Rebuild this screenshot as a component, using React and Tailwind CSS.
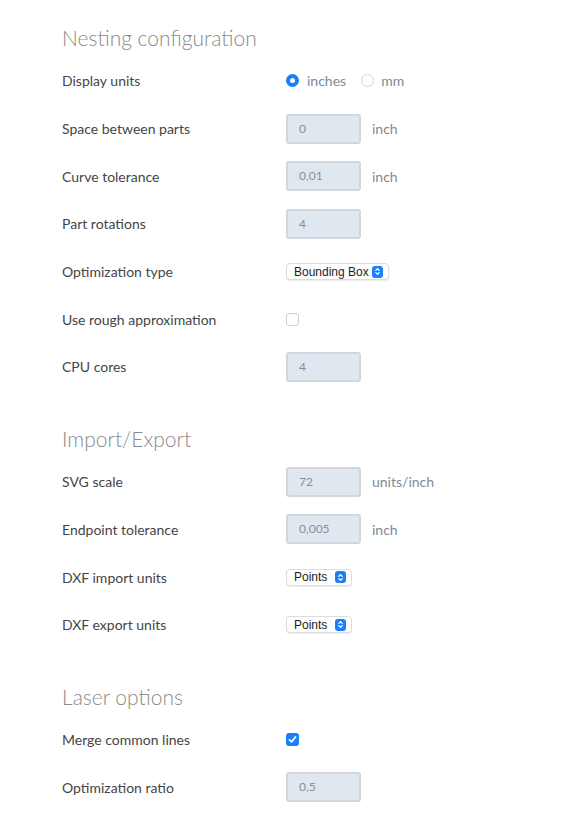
const font = { fontFamily: "Lato, 'Open Sans', sans-serif" };

const Stepper = () => (
  <span className="ml-auto flex h-[12px] w-[11px] items-center justify-center rounded-[3px] bg-[#1a7ff8]">
    <svg width="7" height="9" viewBox="0 0 7 9" fill="none">
      <path d="M1.8 3.4 L3.5 1.7 L5.2 3.4" stroke="white" strokeWidth="1.3" strokeLinecap="round" strokeLinejoin="round" />
      <path d="M1.8 5.6 L3.5 7.3 L5.2 5.6" stroke="white" strokeWidth="1.3" strokeLinecap="round" strokeLinejoin="round" />
    </svg>
  </span>
);

const Select = ({ value, width }) => (
  <div
    className={`flex h-[17px] items-center rounded-[4px] border border-[#dcdcdc] bg-white pl-[7px] pr-[5px] text-[12px] text-[#1c1c1c] shadow-[0_1px_1px_rgba(0,0,0,0.08)] ${width}`}
    style={{ fontFamily: "'Liberation Sans', Arial, sans-serif" }}
  >
    <span>{value}</span>
    <Stepper />
  </div>
);

const Field = ({ value, unit }) => (
  <div className="flex items-center">
    <div className="flex h-[30px] w-[75px] items-center rounded-[3px] border-2 border-[#cfd7e1] bg-[#e1e7ee] pl-[11px] text-[12px] text-[#8190a3]">
      {value}
    </div>
    {unit && <span className="ml-[11px] text-[14px] text-[#7d8a9a]">{unit}</span>}
  </div>
);

const Checkbox = ({ checked }) =>
  checked ? (
    <span className="flex h-[13px] w-[13px] items-center justify-center rounded-[3px] bg-[#1a7ff8]">
      <svg width="9" height="9" viewBox="0 0 9 9" fill="none">
        <path d="M1.5 4.8 L3.6 6.9 L7.5 2" stroke="white" strokeWidth="1.7" strokeLinecap="round" strokeLinejoin="round" />
      </svg>
    </span>
  ) : (
    <span className="block h-[13px] w-[13px] rounded-[3px] border border-[#cfcfcf] bg-white" />
  );

const Radio = () => (
  <div className="flex items-center text-[14px] text-[#7d8a9a]">
    <span className="block h-[13px] w-[13px] rounded-full border-[4px] border-[#1a7ff8] bg-white" />
    <span className="ml-[8px]">inches</span>
    <span className="ml-[15px] block h-[13px] w-[13px] rounded-full border border-[#d6d6d6] bg-white" />
    <span className="ml-[7px]">mm</span>
  </div>
);

const Row = ({ label, children }) => (
  <div className="flex h-[47.7px] items-center">
    <div className="w-[224px] text-[14px] text-[#454545]">{label}</div>
    <div className="flex-1">{children}</div>
  </div>
);

const Section = ({ title, className, children }) => (
  <section className={className}>
    <h2 className="flex h-[38px] items-center text-[21px] font-light text-[#8a8a8a]">{title}</h2>
    {children}
  </section>
);

export default function App() {
  return (
    <div className="min-h-[839px] bg-white pl-[62px] pt-[19px]" style={font}>
      <Section title="Nesting configuration">
        <Row label="Display units">
          <Radio />
        </Row>
        <Row label="Space between parts">
          <Field value="0" unit="inch" />
        </Row>
        <Row label="Curve tolerance">
          <Field value="0,01" unit="inch" />
        </Row>
        <Row label="Part rotations">
          <Field value="4" />
        </Row>
        <Row label="Optimization type">
          <Select value="Bounding Box" width="w-[103px]" />
        </Row>
        <Row label="Use rough approximation">
          <Checkbox />
        </Row>
        <Row label="CPU cores">
          <Field value="4" />
        </Row>
      </Section>

      <Section title="Import/Export" className="mt-[29px]">
        <Row label="SVG scale">
          <Field value="72" unit="units/inch" />
        </Row>
        <Row label="Endpoint tolerance">
          <Field value="0,005" unit="inch" />
        </Row>
        <Row label="DXF import units">
          <Select value="Points" width="w-[66px]" />
        </Row>
        <Row label="DXF export units">
          <Select value="Points" width="w-[66px]" />
        </Row>
      </Section>

      <Section title="Laser options" className="mt-[29px]">
        <Row label="Merge common lines">
          <Checkbox checked />
        </Row>
        <Row label="Optimization ratio">
          <Field value="0,5" />
        </Row>
      </Section>
    </div>
  );
}
